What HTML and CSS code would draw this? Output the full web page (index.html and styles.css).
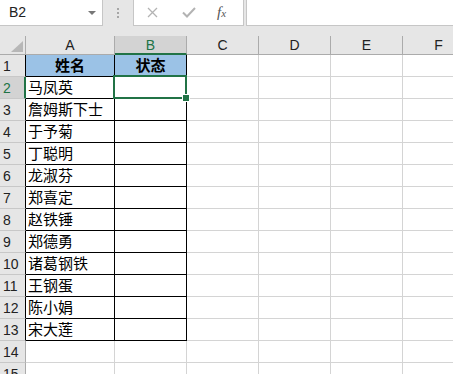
FILE: index.html
```html
<!DOCTYPE html>
<html lang="zh">
<head>
<meta charset="utf-8">
<link rel="stylesheet" href="styles.css">
</head>
<body>
<div class="app">
  <div class="toolbar">
    <div class="namebox"><span class="ref">B2</span><i class="caret"></i></div>
    <div class="grip"><i></i><i></i><i></i></div>
    <div class="fbtns">
      <svg class="ico" width="11" height="11" viewBox="0 0 11 11"><path d="M1 1L10 10M10 1L1 10" stroke="#b3b3b3" stroke-width="1.3" fill="none"/></svg>
      <svg class="ico" width="14" height="11" viewBox="0 0 14 11"><path d="M1 5.5L5 9.5L13 1" stroke="#b3b3b3" stroke-width="2" fill="none"/></svg>
      <span class="fx">f<span class="fxx">x</span></span>
    </div>
    <div class="finput"></div>
  </div>
  <div class="gap"></div>
  <div class="sheet">
    <div class="corner"><i class="tri"></i></div>
    <div class="ch">A</div><div class="ch sel">B</div><div class="ch">C</div><div class="ch">D</div><div class="ch">E</div><div class="ch">F</div>

    <div class="rh tb">1</div><div class="c t hd">姓名</div><div class="c t hd">状态</div><div class="c"></div><div class="c"></div><div class="c"></div><div class="c"></div>
    <div class="rh sel">2</div><div class="c t">马凤英</div><div class="c t act"></div><div class="c"></div><div class="c"></div><div class="c"></div><div class="c"></div>
    <div class="rh tb">3</div><div class="c t">詹姆斯下士</div><div class="c t"></div><div class="c"></div><div class="c"></div><div class="c"></div><div class="c"></div>
    <div class="rh tb">4</div><div class="c t">于予菊</div><div class="c t"></div><div class="c"></div><div class="c"></div><div class="c"></div><div class="c"></div>
    <div class="rh tb">5</div><div class="c t">丁聪明</div><div class="c t"></div><div class="c"></div><div class="c"></div><div class="c"></div><div class="c"></div>
    <div class="rh tb">6</div><div class="c t">龙淑芬</div><div class="c t"></div><div class="c"></div><div class="c"></div><div class="c"></div><div class="c"></div>
    <div class="rh tb">7</div><div class="c t">郑喜定</div><div class="c t"></div><div class="c"></div><div class="c"></div><div class="c"></div><div class="c"></div>
    <div class="rh tb">8</div><div class="c t">赵铁锤</div><div class="c t"></div><div class="c"></div><div class="c"></div><div class="c"></div><div class="c"></div>
    <div class="rh tb">9</div><div class="c t">郑德勇</div><div class="c t"></div><div class="c"></div><div class="c"></div><div class="c"></div><div class="c"></div>
    <div class="rh tb">10</div><div class="c t">诸葛钢铁</div><div class="c t"></div><div class="c"></div><div class="c"></div><div class="c"></div><div class="c"></div>
    <div class="rh tb">11</div><div class="c t">王钢蛋</div><div class="c t"></div><div class="c"></div><div class="c"></div><div class="c"></div><div class="c"></div>
    <div class="rh tb">12</div><div class="c t">陈小娟</div><div class="c t"></div><div class="c"></div><div class="c"></div><div class="c"></div><div class="c"></div>
    <div class="rh tb">13</div><div class="c t">宋大莲</div><div class="c t"></div><div class="c"></div><div class="c"></div><div class="c"></div><div class="c"></div>
    <div class="rh">14</div><div class="c"></div><div class="c"></div><div class="c"></div><div class="c"></div><div class="c"></div><div class="c"></div>
    <div class="rh">15</div><div class="c"></div><div class="c"></div><div class="c"></div><div class="c"></div><div class="c"></div><div class="c"></div>
  </div>
</div>
</body>
</html>
```
FILE: styles.css
```css
* { box-sizing: border-box; }
html, body { margin: 0; padding: 0; }
body {
  width: 453px;
  height: 374px;
  overflow: hidden;
  background: #e6e6e6;
  font-family: "Liberation Sans", "Noto Sans CJK SC", sans-serif;
}
.app { width: 453px; height: 374px; overflow: hidden; }

.toolbar {
  display: flex;
  height: 26px;
}
.namebox {
  width: 103px;
  height: 26px;
  background: #fff;
  border-right: 1px solid #c6c6c6;
  border-bottom: 1px solid #c6c6c6;
  display: flex;
  align-items: center;
  justify-content: space-between;
  padding: 0 6px 1px 9px;
}
.ref { font-size: 14px; color: #222; }
.caret {
  width: 0; height: 0;
  border-left: 4px solid transparent;
  border-right: 4px solid transparent;
  border-top: 4px solid #777;
  margin-top: 1px;
}
.grip {
  width: 30px;
  display: flex;
  flex-direction: column;
  align-items: center;
  justify-content: center;
  gap: 2px;
  padding-bottom: 1px;
}
.grip i {
  display: block;
  width: 2px; height: 2px;
  background: #a6a6a6;
}
.fbtns {
  width: 111px;
  height: 26px;
  background: #fff;
  border-left: 1px solid #c6c6c6;
  border-right: 1px solid #c6c6c6;
  border-bottom: 1px solid #c6c6c6;
  display: flex;
  align-items: center;
  padding: 0 0 1px 13px;
}
.ico { display: block; }
.ico:nth-child(2) { margin-left: 24px; }
.fx {
  margin-left: 21px;
  font-family: "Liberation Serif", serif;
  font-style: italic;
  font-size: 15px;
  color: #555;
  line-height: 1;
}
.fxx { font-size: 11px; }
.finput {
  flex: 1;
  margin-left: 2px;
  height: 26px;
  background: #fff;
  border-left: 1px solid #c6c6c6;
  border-bottom: 1px solid #c6c6c6;
}
.gap { height: 10px; }

.sheet {
  display: grid;
  grid-template-columns: 26px 89px 72px 72px 72px 72px 72px;
  grid-template-rows: 19px repeat(15, 22px);
  width: 475px;
  background: #fff;
}
.corner {
  background: #e6e6e6;
  border-right: 1px solid #ababab;
  border-bottom: 1px solid #ababab;
  display: flex;
  justify-content: flex-end;
  align-items: flex-end;
  padding: 0 2px 2px 0;
}
.tri {
  display: block;
  width: 12px;
  height: 11px;
  background: #b7b7b7;
  clip-path: polygon(100% 0, 100% 100%, 0 100%);
}
.ch {
  background: #e6e6e6;
  border-right: 1px solid #ababab;
  border-bottom: 1px solid #ababab;
  font-size: 14px;
  color: #222;
  text-align: center;
  line-height: 18px;
}
.ch.sel {
  background: #d3d3d3;
  color: #217346;
  border-bottom: 2px solid #217346;
}
.rh {
  background: #e6e6e6;
  border-right: 1px solid #ababab;
  border-bottom: 1px solid #c8c8c8;
  font-size: 14px;
  color: #222;
  line-height: 22px;
  padding-left: 3px;
}
.rh.tb { border-right-color: #000; }
.rh.sel {
  background: #d3d3d3;
  color: #217346;
  border-right: 2px solid #217346;
}
.c {
  border-right: 1px solid #d4d4d4;
  border-bottom: 1px solid #d4d4d4;
  font-family: "Noto Sans CJK SC", sans-serif;
  font-size: 15px;
  line-height: 20px;
  color: #000;
  padding-left: 2px;
  white-space: nowrap;
}
.c.t {
  border-right-color: #000;
  border-bottom-color: #000;
}
.c.hd {
  background: #9bc2e6;
  font-weight: bold;
  text-align: center;
  padding-left: 0;
}
.c.act { position: relative; }
.c.act::after {
  content: "";
  position: absolute;
  left: -2px; top: -2px; right: -1px; bottom: -1px;
  border: 2px solid #217346;
  z-index: 2;
}
.c.act::before {
  content: "";
  position: absolute;
  right: -4px; bottom: -4px;
  width: 6px; height: 6px;
  background: #217346;
  border: 1px solid #fff;
  z-index: 3;
}
```
